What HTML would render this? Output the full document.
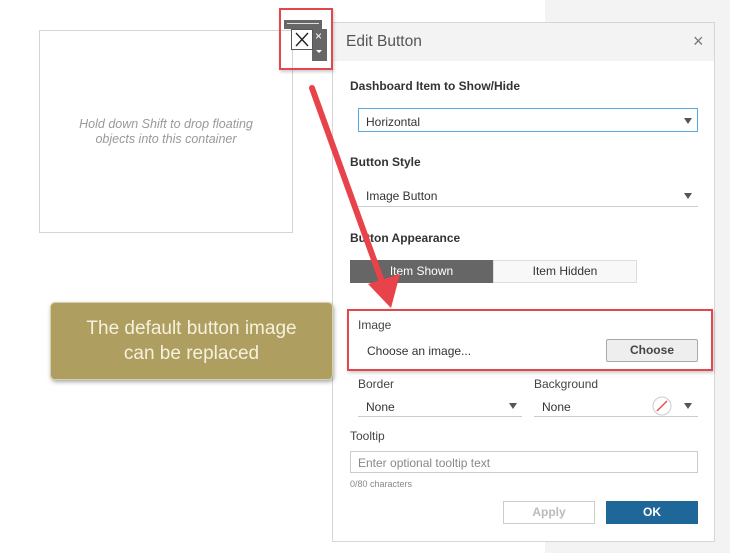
<!DOCTYPE html>
<html><head><style>
*{margin:0;padding:0;box-sizing:border-box}
body{width:730px;height:553px;position:relative;background:#fff;font-family:"Liberation Sans",sans-serif;overflow:hidden;color:#333}
.a{position:absolute}
.lbl{font-size:12px;font-weight:bold;color:#333}
.sel{border-bottom:1px solid #ccc;font-size:12px;color:#333}
.tri{position:absolute;width:0;height:0;border-left:4px solid transparent;border-right:4px solid transparent;border-top:6px solid #555}
</style></head><body>
<div class="a" style="left:545px;top:0;width:185px;height:553px;background:#f3f3f3"></div>
<div class="a" style="left:39px;top:30px;width:254px;height:203px;border:1px solid #d4d4d4"></div>
<div class="a" style="left:39px;top:117px;width:254px;text-align:center;font-style:italic;font-size:12.5px;color:#999;line-height:15px">Hold down Shift to drop floating<br>objects into this container</div>

<div class="a" style="left:332px;top:22px;width:383px;height:520px;background:#fff;border:1px solid #d6d6d6"></div>
<div class="a" style="left:333px;top:23px;width:381px;height:38px;background:#f3f3f3"></div>
<div class="a" style="left:346px;top:33px;font-size:15.5px;color:#555">Edit Button</div>
<div class="a" style="left:693px;top:31px;font-size:18px;color:#777">×</div>

<div class="a lbl" style="left:350px;top:79px">Dashboard Item to Show/Hide</div>
<div class="a" style="left:358px;top:108px;width:340px;height:24px;border:1px solid #5aa7dd;font-size:12px;padding:6px 7px">Horizontal</div>
<div class="tri" style="left:684px;top:118px"></div>

<div class="a lbl" style="left:350px;top:155px">Button Style</div>
<div class="a sel" style="left:358px;top:183px;width:340px;height:24px;padding:6px 8px">Image Button</div>
<div class="tri" style="left:684px;top:193px"></div>

<div class="a lbl" style="left:350px;top:231px">Button Appearance</div>
<div class="a" style="left:350px;top:260px;width:143px;height:23px;background:#666;color:#fff;font-size:12px;text-align:center;line-height:23px">Item Shown</div>
<div class="a" style="left:493px;top:260px;width:144px;height:23px;background:#f8f8f8;border:1px solid #ddd;color:#333;font-size:12px;text-align:center;line-height:21px">Item Hidden</div>

<div class="a" style="left:347px;top:309px;width:366px;height:62px;border:2px solid #e3474e;box-shadow:1px 2px 3px rgba(0,0,0,.2)"></div>
<div class="a" style="left:358px;top:318px;font-size:12px;color:#444">Image</div>
<div class="a" style="left:367px;top:344px;font-size:12px;color:#333">Choose an image...</div>
<div class="a" style="left:606px;top:339px;width:92px;height:23px;background:#eee;border:1px solid #aaa;border-radius:2px;font-size:12px;font-weight:bold;color:#444;text-align:center;line-height:21px">Choose</div>

<div class="a" style="left:358px;top:377px;font-size:12px;color:#444">Border</div>
<div class="a sel" style="left:358px;top:396px;width:164px;height:21px;padding:4px 8px">None</div>
<div class="tri" style="left:509px;top:403px"></div>
<div class="a" style="left:534px;top:377px;font-size:12px;color:#444">Background</div>
<div class="a sel" style="left:534px;top:396px;width:164px;height:21px;padding:4px 8px">None</div>
<svg class="a" style="left:652px;top:396px" width="20" height="20"><circle cx="10" cy="10" r="9" fill="#fff" stroke="#ccc"/><line x1="5" y1="15" x2="15" y2="5" stroke="#e3474e" stroke-width="1.3"/></svg>
<div class="tri" style="left:684px;top:403px"></div>

<div class="a" style="left:350px;top:429px;font-size:12px;color:#444">Tooltip</div>
<div class="a" style="left:350px;top:451px;width:348px;height:22px;border:1px solid #ccc;font-size:12px;color:#888;padding:4px 7px">Enter optional tooltip text</div>
<div class="a" style="left:350px;top:479px;font-size:9px;color:#888">0/80 characters</div>
<div class="a" style="left:503px;top:501px;width:92px;height:23px;border:1px solid #ccc;font-size:12px;font-weight:bold;color:#bbb;text-align:center;line-height:21px">Apply</div>
<div class="a" style="left:606px;top:501px;width:92px;height:23px;background:#1f6699;font-size:12px;font-weight:bold;color:#fff;text-align:center;line-height:23px">OK</div>

<div class="a" style="left:284px;top:20px;width:38px;height:9px;background:#666"></div>
<div class="a" style="left:287px;top:23px;width:32px;height:1px;background:#ddd"></div>
<div class="a" style="left:312px;top:29px;width:15px;height:32px;background:#666"></div>
<div class="a" style="left:315px;top:29px;font-size:12px;color:#fff">×</div>
<div class="a" style="left:316px;top:50px;border-left:3px solid transparent;border-right:3px solid transparent;border-top:3px solid #fff"></div>
<div class="a" style="left:291px;top:29px;width:22px;height:21px;background:#fff;border:1px solid #555"></div>
<svg class="a" style="left:291px;top:29px" width="22" height="21"><path d="M5 4L17 17M17 4L5 17" stroke="#222" stroke-width="1.4"/></svg>
<div class="a" style="left:279px;top:8px;width:54px;height:62px;border:2px solid #e3474e;box-shadow:1px 2px 3px rgba(0,0,0,.2)"></div>

<svg class="a" style="left:0;top:0" width="730" height="553"><line x1="312" y1="88" x2="382" y2="282" stroke="#e8424a" stroke-width="6" stroke-linecap="round"/><polygon points="368,284 400,274 391,308" fill="#e8424a"/></svg>

<div class="a" style="left:50px;top:302px;width:283px;height:78px;background:#ae9f60;border-radius:5px;border:1px solid #d8d0a8;box-shadow:1px 2px 4px rgba(0,0,0,.35);color:#f6f1de;font-size:19px;text-align:center;line-height:25px;padding-top:13px">The default button image<br>can be replaced</div>
</body></html>
